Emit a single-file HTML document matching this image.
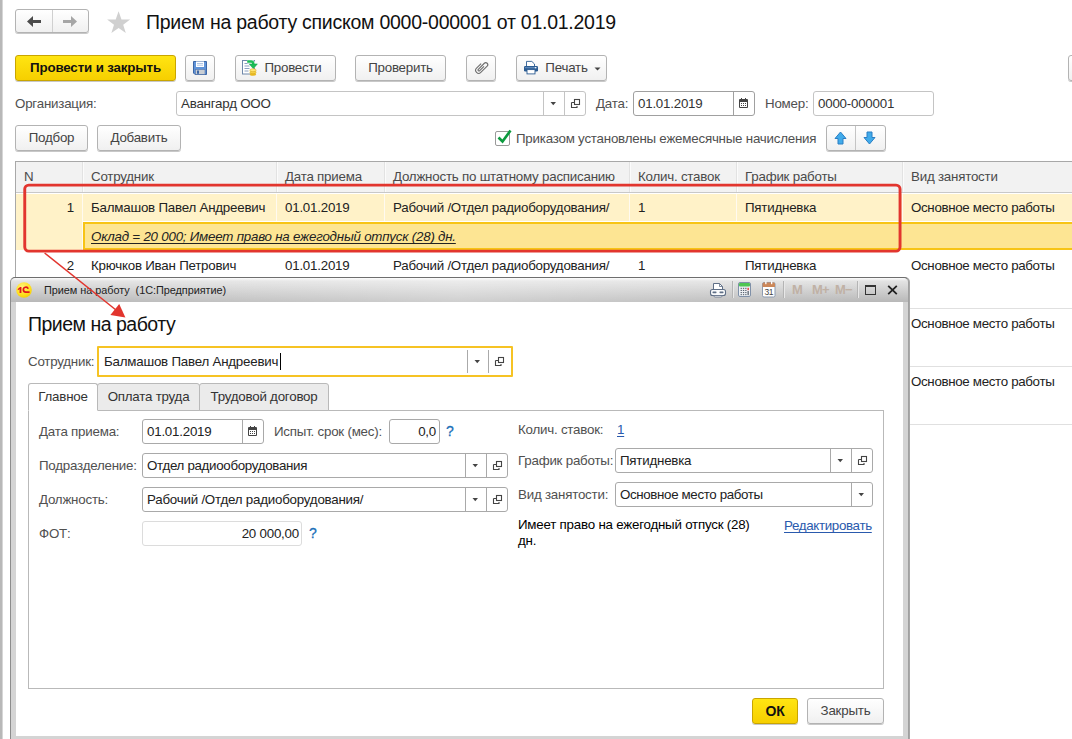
<!DOCTYPE html>
<html lang="ru"><head><meta charset="utf-8"><title>Прием на работу списком</title>
<style>
*{box-sizing:border-box;margin:0;padding:0}
html,body{width:1072px;height:739px;overflow:hidden;background:#fff}
body{position:relative;font-family:"Liberation Sans",Arial,sans-serif;font-size:13.33px;letter-spacing:-0.22px;color:#333}
.a{position:absolute;white-space:nowrap}
.btn{position:absolute;border:1px solid #b3b3b3;border-radius:3px;background:linear-gradient(#fff,#f0f0f0);box-shadow:0 1px 0 #c8c8c8;text-align:center;white-space:nowrap;color:#444}
.ybtn{background:linear-gradient(#ffe512,#f6cf00);border-color:#c9a500;color:#111;font-weight:bold;letter-spacing:-0.14px}
.inp{position:absolute;border:1px solid #c4c4c4;border-radius:3px;background:#fff;white-space:nowrap}
.inp .t{position:absolute;left:4px;top:0}
.sep{position:absolute;top:0;bottom:0;width:1px;background:#c4c4c4}
.lbl{position:absolute;white-space:nowrap;color:#505050}

.hs{top:162px;width:1px;height:30px;background:#e2e2e2;box-shadow:1px 0 0 #fbfbfb}
.rs{top:194px;width:1px;height:27px;background:#fffaf0}
.th{top:169px;color:#4a4a4a;line-height:15px}
.td{color:#222;line-height:15px}
.tab{top:383px;height:28px;border:1px solid #b9b9b9;border-radius:3px 3px 0 0;background:#ebebeb;text-align:center;line-height:26px;color:#333}
.tab.act{background:#fff;border-bottom-color:#fff;z-index:2}
.inp.d{border-color:#a9a9a9;line-height:23px}
.inp.d .t{color:#222}
.inp.d .sep{background:#a9a9a9}
.q{color:#1a6fb8;font-size:14px;line-height:15px;-webkit-text-stroke:.3px #1a6fb8}
.lnk{color:#2a5aad;text-decoration:underline;text-decoration-thickness:1px;text-underline-offset:2px;text-decoration-skip-ink:none;line-height:15px}
.mm{top:282px;font-size:13px;font-weight:bold;color:#c0b1a5;line-height:15px;letter-spacing:-0.9px}
</style></head><body>
<svg width="0" height="0" style="position:absolute"><defs>
<g id="opn"><path d="M1.500 4.500h2.500M1.500 4.500v5h5.500v-1.500" fill="none" stroke="#444" stroke-width="1.100"/><rect x="4.500" y="1.500" width="5" height="5" fill="none" stroke="#444" stroke-width="1.100"/></g>
<g id="cal"><rect x="1" y="2" width="9" height="9" rx="1" fill="#444"/><rect x="2" y="5" width="7" height="5" fill="#fff"/><rect x="3" y="6" width="1" height="1" fill="#444"/><rect x="5" y="6" width="1" height="1" fill="#444"/><rect x="7" y="6" width="1" height="1" fill="#444"/><rect x="3" y="8" width="1" height="1" fill="#444"/><rect x="5" y="8" width="1" height="1" fill="#444"/><rect x="7" y="8" width="1" height="1" fill="#444"/><rect x="3" y="1" width="1" height="2" fill="#444"/><rect x="7" y="1" width="1" height="2" fill="#444"/></g>
<g id="dd"><path d="M.5 0h5.500l-2.750 3.200z" fill="#444"/></g>
</defs></svg>
<!-- left strip -->
<div class="a" style="left:0;top:0;width:3px;height:739px;background:linear-gradient(90deg,#b8b8b8 2px,#d6d6d6 2px)"></div>

<!-- nav -->
<div class="btn" style="left:15px;top:9px;width:74px;height:24px"></div>
<div class="a" style="left:52px;top:10px;width:1px;height:22px;background:#d0d0d0"></div>
<svg class="a" style="left:15px;top:9px" width="73" height="24"><path d="M12 12.500l6-5.500v4h8v3h-8v4z" fill="#4b4b4b"/><path d="M62 12.500l-6-5.500v4h-8v3h8v4z" fill="#a6a6a6"/></svg>
<svg class="a" style="left:106px;top:10px" width="26" height="24" viewBox="0 0 26 24"><path d="M12.600 1.200l2.900 8.300h8.600l-6.900 5.200 2.600 8.300-7.200-5.100-7.200 5.100 2.600-8.300-6.900-5.200h8.600z" fill="#d0d0d0"/></svg>
<div class="a" style="left:146px;top:10px;font-size:19.5px;letter-spacing:-0.25px;color:#111;line-height:24px">Прием на работу списком 0000-000001 от 01.01.2019</div>

<!-- toolbar -->
<div class="btn ybtn" style="left:15px;top:55px;width:161px;height:26px;line-height:24px">Провести и закрыть</div>
<div class="btn" style="left:185px;top:55px;width:30px;height:26px"></div>
<div class="btn" style="left:235px;top:55px;width:101px;height:26px;line-height:24px;padding-left:15px">Провести</div>
<div class="btn" style="left:355px;top:55px;width:91px;height:26px;line-height:24px">Проверить</div>
<div class="btn" style="left:466px;top:55px;width:30px;height:26px"></div>
<div class="btn" style="left:516px;top:55px;width:91px;height:26px;line-height:24px;padding-left:10px">Печать</div>
<div class="btn" style="left:1068px;top:55px;width:20px;height:26px"></div>

<!-- org row -->
<div class="lbl" style="left:15px;top:96px">Организация:</div>
<div class="inp" style="left:176px;top:91px;width:410px;height:25px;line-height:23px"><span class="t">Авангард ООО</span><div class="sep" style="left:366px"></div><div class="sep" style="left:387px"></div></div>
<div class="lbl" style="left:596px;top:96px">Дата:</div>
<div class="inp" style="left:633px;top:91px;width:122px;height:25px;line-height:23px;border-color:#a0a0a0"><span class="t">01.01.2019</span><div class="sep" style="left:99px;background:#a0a0a0"></div></div>
<div class="lbl" style="left:765px;top:96px">Номер:</div>
<div class="inp" style="left:813px;top:91px;width:121px;height:25px;line-height:23px"><span class="t">0000-000001</span></div>

<!-- row 3 -->
<div class="btn" style="left:15px;top:125px;width:73px;height:26px;line-height:24px">Подбор</div>
<div class="btn" style="left:97px;top:125px;width:84px;height:26px;line-height:24px">Добавить</div>
<div class="lbl" style="left:516px;top:131px">Приказом установлены ежемесячные начисления</div>
<div class="btn" style="left:826px;top:125px;width:60px;height:26px"></div>
<div class="a" style="left:855px;top:126px;width:1px;height:24px;background:#c4c4c4"></div>

<!-- icons -->
<svg class="a" style="left:192px;top:60px" width="16" height="16" viewBox="0 0 16 16"><path d="M1.500 1.500h13v13h-11.500l-1.500-1.500z" fill="#5f93d8" stroke="#3c66a6"/><rect x="4" y="1.500" width="8" height="5.500" fill="#fff"/><path d="M5 3.500h6M5 5.200h6" stroke="#9db7dd" stroke-width=".8"/><rect x="3.500" y="9.500" width="9.500" height="4.800" fill="#c9ced4" stroke="#5577aa" stroke-width=".6"/><rect x="5" y="10.500" width="2" height="3.300" fill="#3c66a6"/></svg>
<svg class="a" style="left:241px;top:59px" width="18" height="18" viewBox="0 0 18 18"><rect x="1.500" y="1.500" width="12" height="13.500" fill="#fff" stroke="#6f88aa"/><path d="M3.500 4.500h5M3.500 7h5M3.500 9.500h5M3.500 12h4" stroke="#8aa0bf" stroke-width="1"/><path d="M6.200 2.600H10.200Q12.300 2.600 12.300 5.200" fill="none" stroke="#fff" stroke-width="3.800"/><path d="M7.400 4.400H17L12.200 10.300z" fill="#fff"/><path d="M6.200 2.600H10.200Q12.300 2.600 12.300 5.200" fill="none" stroke="#1bbd56" stroke-width="2.500"/><path d="M8.200 4.900H16.400L12.300 9.700z" fill="#1bbd56" stroke="#12a548" stroke-width=".5"/><ellipse cx="12" cy="15.200" rx="3.200" ry="1.500" fill="#e8b820"/><ellipse cx="12" cy="13.200" rx="3.200" ry="1.500" fill="#f5d24a" stroke="#d6a410" stroke-width=".5"/><ellipse cx="12" cy="11.200" rx="3.200" ry="1.500" fill="#ffe577" stroke="#d6a410" stroke-width=".5"/></svg>
<svg class="a" style="left:474px;top:60px" width="15" height="15" viewBox="0 0 15 15"><g transform="rotate(45 7.500 7.500)" fill="none" stroke="#6e6e6e" stroke-width="1.100"><path d="M4.500 5v6.500a3 3 0 0 0 6 0v-9a2 2 0 0 0-4 0v8.500a1 1 0 0 0 2 0v-6"/></g></svg>
<svg class="a" style="left:523px;top:60px" width="16" height="15" viewBox="0 0 16 15"><path d="M3.500 1.400h5.300l2.700 2.600v3h-8z" fill="#fff" stroke="#2c5c92" stroke-width=".9"/><rect x="1" y="6" width="14" height="5.600" rx="1.300" fill="#2c5c92"/><rect x="2" y="7.300" width="12" height=".9" fill="#6f9aca"/><rect x="11.800" y="7.100" width="1.400" height="1.200" fill="#fff"/><rect x="4" y="9.600" width="8" height="4.300" fill="#fff" stroke="#2c5c92" stroke-width=".9"/></svg>
<svg class="a" style="left:594px;top:67px" width="7" height="4"><path d="M.5.500h6l-3 3z" fill="#444"/></svg>
<!-- dropdown/open icons org -->
<svg class="a" style="left:550px;top:102px" width="7" height="4"><path d="M.5 0h5.500l-2.750 3.200z" fill="#444"/></svg>
<svg class="a op" style="left:570px;top:98px" width="11" height="11"><use href="#opn"/></svg>
<svg class="a" style="left:738px;top:97px" width="11" height="12"><use href="#cal"/></svg>
<!-- checkbox -->
<div class="a" style="left:495px;top:131px;width:15px;height:15px;border:1px solid #9a9a9a;border-radius:2px;background:#fff"></div>
<svg class="a" style="left:495px;top:127px" width="18" height="18"><path d="M3.500 10.500l4 4 8-11" fill="none" stroke="#0c9a3e" stroke-width="2.600"/></svg>
<!-- up/down -->
<svg class="a" style="left:834px;top:131px" width="14" height="14"><path d="M6.500 1l5.500 6.500h-3v5.500h-5v-5.500h-3z" fill="#41abea" stroke="#2a7ec4" stroke-width="1"/></svg>
<svg class="a" style="left:863px;top:131px" width="14" height="14"><path d="M6.500 13l5.500-6.500h-3v-5.500h-5v5.500h-3z" fill="#41abea" stroke="#2a7ec4" stroke-width="1"/></svg>

<!-- table -->
<div class="a" style="left:15px;top:161px;width:1057px;height:117px;border-left:1px solid #a8a8a8;border-top:1px solid #a8a8a8;background:#fff"></div>
<div class="a" style="left:16px;top:162px;width:1056px;height:31px;background:#f2f2f2;border-bottom:1px solid #c8c8c8"></div>
<div class="a" style="left:16px;top:194px;width:1056px;height:27px;background:#fff2c8"></div>
<div class="a" style="left:16px;top:221px;width:66px;height:29px;background:#fff2c8"></div>
<div class="a" style="left:83px;top:222px;width:989px;height:28px;background:#fde593;border-top:2px solid #f7c416;border-bottom:2px solid #f7c416;border-left:2px solid #f7c416"></div>
<!-- header col seps -->
<div class="a hs" style="left:82px"></div><div class="a hs" style="left:276px"></div><div class="a hs" style="left:384px"></div><div class="a hs" style="left:629px"></div><div class="a hs" style="left:736px"></div><div class="a hs" style="left:902px"></div>
<div class="a rs" style="left:82px;height:56px"></div><div class="a rs" style="left:276px"></div><div class="a rs" style="left:384px"></div><div class="a rs" style="left:629px"></div><div class="a rs" style="left:736px"></div><div class="a rs" style="left:902px"></div>
<!-- right-hand rows behind dialog -->
<div class="a" style="left:909px;top:308px;width:163px;height:1px;background:#e0e0e0"></div>
<div class="a" style="left:909px;top:366px;width:163px;height:1px;background:#e0e0e0"></div>
<div class="a" style="left:909px;top:424px;width:163px;height:1px;background:#e0e0e0"></div>
<!-- header text -->
<div class="a th" style="left:24px">N</div><div class="a th" style="left:91px">Сотрудник</div><div class="a th" style="left:285px">Дата приема</div><div class="a th" style="left:393px">Должность по штатному расписанию</div><div class="a th" style="left:638px">Колич. ставок</div><div class="a th" style="left:745px">График работы</div><div class="a th" style="left:911px">Вид занятости</div>
<!-- row1 -->
<div class="a td" style="left:16px;top:200px;width:58px;text-align:right">1</div><div class="a td" style="left:91px;top:200px">Балмашов Павел Андреевич</div><div class="a td" style="left:285px;top:200px">01.01.2019</div><div class="a td" style="left:393px;top:200px">Рабочий /Отдел радиоборудования/</div><div class="a td" style="left:638px;top:200px">1</div><div class="a td" style="left:745px;top:200px">Пятидневка</div><div class="a td" style="left:911px;top:200px"><span style="letter-spacing:-0.33px">Основное место работы</span></div>
<div class="a td" style="left:91px;top:229px;font-style:italic;text-decoration:underline;text-decoration-thickness:1px;text-underline-offset:2px;text-decoration-skip-ink:none">Оклад = 20 000; Имеет право на ежегодный отпуск (28) дн.</div>
<!-- row2 -->
<div class="a td" style="left:16px;top:258px;width:58px;text-align:right">2</div><div class="a td" style="left:91px;top:258px">Крючков Иван Петрович</div><div class="a td" style="left:285px;top:258px">01.01.2019</div><div class="a td" style="left:393px;top:258px">Рабочий /Отдел радиоборудования/</div><div class="a td" style="left:638px;top:258px">1</div><div class="a td" style="left:745px;top:258px">Пятидневка</div><div class="a td" style="left:911px;top:258px"><span style="letter-spacing:-0.33px">Основное место работы</span></div>
<div class="a td" style="left:911px;top:316px"><span style="letter-spacing:-0.33px">Основное место работы</span></div>
<div class="a td" style="left:911px;top:374px"><span style="letter-spacing:-0.33px">Основное место работы</span></div>
<!-- red rect -->
<svg class="a" style="left:0;top:170px" width="1072" height="100"><rect x="24.750" y="15.100" width="875.300" height="66" rx="4" fill="none" stroke="#e2352e" stroke-width="2.900"/></svg>

<!-- dialog -->
<div class="a" id="dlg" style="left:10px;top:277px;width:899px;height:470px;background:#d4d4d4;border:1px solid #8c8c8c;border-top-color:#6e6e6e;border-right-color:#a0a0a0;border-radius:5px 5px 0 0;box-shadow:1px 0 0 #a8a8a8"></div>
<div class="a" style="left:11px;top:278px;width:897px;height:24px;background:linear-gradient(90deg,rgba(255,255,255,0) 4%,rgba(255,255,255,.32) 50%,rgba(255,255,255,0) 96%),linear-gradient(#fcfcfc 0,#e3e3e3 3px,#cecece 55%,#b8b8b8 100%);border-radius:5px 5px 0 0"></div>
<div class="a" style="left:16px;top:302px;width:887px;height:434px;background:#fff"></div>
<div class="a" style="left:44px;top:283px;font-size:10.9px;color:#222;line-height:14px;white-space:pre;letter-spacing:-0.05px">Прием на работу  (1С:Предприятие)</div>
<div class="a" style="left:28px;top:312px;font-size:19.5px;letter-spacing:-0.5px;color:#111;line-height:24px">Прием на работу</div>
<div class="lbl" style="left:28px;top:354px">Сотрудник:</div>
<div class="inp" style="left:97px;top:346px;width:416px;height:31px;border:2px solid #f6c324;border-radius:1px;line-height:27px"><span class="t" style="left:5px;color:#222">Балмашов Павел Андреевич</span><div class="sep" style="left:368px;top:2px;bottom:2px;background:#aaa"></div><div class="sep" style="left:389px;top:2px;bottom:2px;background:#aaa"></div><div class="a" style="left:181px;top:5px;width:1px;height:17px;background:#000"></div></div>
<!-- tabs -->
<div class="a" style="left:28px;top:410px;width:856px;height:279px;border:1px solid #b9b9b9;background:#fff"></div>
<div class="a tab" style="left:97px;width:103px">Оплата труда</div>
<div class="a tab" style="left:199px;width:130px">Трудовой договор</div>
<div class="a tab act" style="left:28px;width:70px">Главное</div>
<!-- left col -->
<div class="lbl" style="left:39px;top:424px">Дата приема:</div>
<div class="inp d" style="left:142px;top:419px;width:122px;height:25px"><span class="t">01.01.2019</span><div class="sep" style="left:99px"></div></div>
<div class="lbl" style="left:274px;top:424px">Испыт. срок (мес):</div>
<div class="inp d" style="left:389px;top:419px;width:51px;height:25px"><span class="t" style="left:auto;right:3px">0,0</span></div>
<div class="a q" style="left:446px;top:424px">?</div>
<div class="lbl" style="left:39px;top:458px">Подразделение:</div>
<div class="inp d" style="left:142px;top:453px;width:366px;height:25px"><span class="t" style="letter-spacing:-0.31px">Отдел радиооборудования</span><div class="sep" style="left:322px"></div><div class="sep" style="left:343px"></div></div>
<div class="lbl" style="left:39px;top:492px">Должность:</div>
<div class="inp d" style="left:142px;top:487px;width:366px;height:25px"><span class="t">Рабочий /Отдел радиоборудования/</span><div class="sep" style="left:322px"></div><div class="sep" style="left:343px"></div></div>
<div class="lbl" style="left:39px;top:526px">ФОТ:</div>
<div class="inp" style="left:142px;top:521px;width:160px;height:25px;line-height:23px;border-color:#dcdcdc"><span class="t" style="left:auto;right:2px;color:#222">20 000,00</span></div>
<div class="a q" style="left:309px;top:526px">?</div>
<!-- right col -->
<div class="lbl" style="left:518px;top:422px">Колич. ставок:</div>
<div class="a lnk" style="left:617px;top:422px">1</div>
<div class="lbl" style="left:518px;top:453px">График работы:</div>
<div class="inp d" style="left:615px;top:448px;width:258px;height:25px"><span class="t">Пятидневка</span><div class="sep" style="left:214px"></div><div class="sep" style="left:235px"></div></div>
<div class="lbl" style="left:518px;top:487px">Вид занятости:</div>
<div class="inp d" style="left:615px;top:482px;width:258px;height:25px"><span class="t" style="letter-spacing:-0.36px">Основное место работы</span><div class="sep" style="left:235px"></div></div>
<div class="a" style="left:518px;top:517px;color:#000;line-height:16px;white-space:normal;width:250px">Имеет право на ежегодный отпуск (28) дн.</div>
<div class="a lnk" style="left:784px;top:518px;letter-spacing:-0.33px">Редактировать</div>
<!-- dialog buttons -->
<div class="btn ybtn" style="left:752px;top:698px;width:46px;height:26px;line-height:24px;font-size:14px">ОК</div>
<div class="btn" style="left:807px;top:698px;width:77px;height:26px;line-height:24px">Закрыть</div>

<!-- dialog titlebar icons -->
<svg class="a" style="left:16px;top:282px" width="16" height="16" viewBox="0 0 16 16"><defs><radialGradient id="yg" cx=".4" cy=".3" r=".8"><stop offset="0" stop-color="#fff27a"/><stop offset=".6" stop-color="#ffe020"/><stop offset="1" stop-color="#f3c800"/></radialGradient></defs><circle cx="8" cy="8" r="7.800" fill="url(#yg)"/><path d="M1.800 6.900L4.100 5H5.400V11H3.600V7.300L1.800 8.300z" fill="#e0151b"/><path d="M12.200 6.800A2.500 2.500 0 1 0 9.700 10.200H13.600" fill="none" stroke="#e0151b" stroke-width="1.700"/></svg>
<svg class="a" style="left:709px;top:282px" width="18" height="16" viewBox="0 0 18 16"><path d="M4.500 1.500h6l3 3v4h-9z" fill="#fff" stroke="#5f6f86" stroke-width="1"/><path d="M10.500 1.500v3h3" fill="none" stroke="#5f6f86" stroke-width=".8"/><rect x="1.500" y="7.500" width="15" height="6" rx="2" fill="#fafbfc" stroke="#5f6f86" stroke-width="1.100"/><rect x="3.500" y="9.600" width="4" height="1.600" rx=".6" fill="#5f6f86"/><rect x="10.500" y="9.600" width="4" height="1.600" rx=".6" fill="#5f6f86"/><path d="M4.500 13.500h9l-1 1.500h-7z" fill="#fff" stroke="#5f6f86" stroke-width=".8"/></svg>
<div class="a" style="left:732px;top:281px;width:1px;height:17px;background:#b4b4b4;box-shadow:1px 0 0 #e8e8e8"></div>
<svg class="a" style="left:738px;top:282px" width="13" height="15" viewBox="0 0 13 15"><rect x=".500" y=".500" width="12" height="14" rx="1.500" fill="#eef1f5" stroke="#7f90a8"/><rect x="1" y="1" width="11" height="3.600" rx="1" fill="#4fc653"/><g fill="#5a6470"><rect x="2.6" y="5.8" width="1.300" height="1.100"/><rect x="4.9" y="5.8" width="1.300" height="1.100"/><rect x="7.2" y="5.8" width="1.300" height="1.100"/><rect x="2.6" y="7.9" width="1.300" height="1.100"/><rect x="4.9" y="7.9" width="1.300" height="1.100"/><rect x="7.2" y="7.9" width="1.300" height="1.100"/><rect x="2.6" y="10" width="1.300" height="1.100"/><rect x="4.9" y="10" width="1.300" height="1.100"/><rect x="7.2" y="10" width="1.300" height="1.100"/><rect x="2.6" y="12.1" width="1.300" height="1.100"/><rect x="4.9" y="12.1" width="1.300" height="1.100"/><rect x="7.2" y="12.1" width="1.300" height="1.100"/></g><rect x="9.500" y="5.800" width="1.300" height="2.400" fill="#ee2a2a"/><rect x="9.500" y="9" width="1.300" height="4.200" fill="#5a6470"/></svg>
<svg class="a" style="left:762px;top:281px" width="14" height="17" viewBox="0 0 14 17"><rect x=".500" y="1.500" width="12.500" height="14.500" rx="1.500" fill="#fff" stroke="#8c9bb0"/><path d="M.500 6V3Q.500 1.500 2 1.500H11.500Q13 1.500 13 3V6z" fill="#cb8759"/><rect x="3.200" y=".400" width="1.300" height="2.800" fill="#fff"/><rect x="9" y=".400" width="1.300" height="2.800" fill="#fff"/><text x="6.800" y="13.800" font-family="Liberation Sans,sans-serif" font-size="8.500" text-anchor="middle" fill="#444" letter-spacing="-.4">31</text></svg>
<div class="a" style="left:783px;top:281px;width:1px;height:17px;background:#b4b4b4;box-shadow:1px 0 0 #e8e8e8"></div>
<div class="a mm" style="left:792px">M</div><div class="a mm" style="left:812px">M+</div><div class="a mm" style="left:835px">M−</div>
<div class="a" style="left:857px;top:281px;width:1px;height:17px;background:#b4b4b4;box-shadow:1px 0 0 #e8e8e8"></div>
<div class="a" style="left:865px;top:285px;width:11px;height:10px;border:1px solid #333;border-top-width:2px"></div>
<svg class="a" style="left:887px;top:285px" width="11" height="10"><path d="M1.200 .8l8.600 8.400M9.800 .8l-8.600 8.400" stroke="#222" stroke-width="1.800"/></svg>
<!-- dialog field icons -->
<svg class="a" style="left:474px;top:360px" width="7" height="4"><use href="#dd"/></svg>
<svg class="a" style="left:494px;top:356px" width="11" height="11"><use href="#opn"/></svg>
<svg class="a" style="left:247px;top:425px" width="11" height="12"><use href="#cal"/></svg>
<svg class="a" style="left:472px;top:464px" width="7" height="4"><use href="#dd"/></svg>
<svg class="a" style="left:492px;top:460px" width="11" height="11"><use href="#opn"/></svg>
<svg class="a" style="left:472px;top:498px" width="7" height="4"><use href="#dd"/></svg>
<svg class="a" style="left:492px;top:494px" width="11" height="11"><use href="#opn"/></svg>
<svg class="a" style="left:837px;top:459px" width="7" height="4"><use href="#dd"/></svg>
<svg class="a" style="left:857px;top:455px" width="11" height="11"><use href="#opn"/></svg>
<svg class="a" style="left:858px;top:493px" width="7" height="4"><use href="#dd"/></svg>
<!-- red arrow -->
<svg class="a" style="left:0;top:240px" width="200" height="100"><line x1="44.6" y1="13" x2="116" y2="70" stroke="#e2352e" stroke-width="1.5"/><path d="M125.400 77.400L110.400 75L119.200 64z" fill="#e2352e"/></svg>

</body></html>
